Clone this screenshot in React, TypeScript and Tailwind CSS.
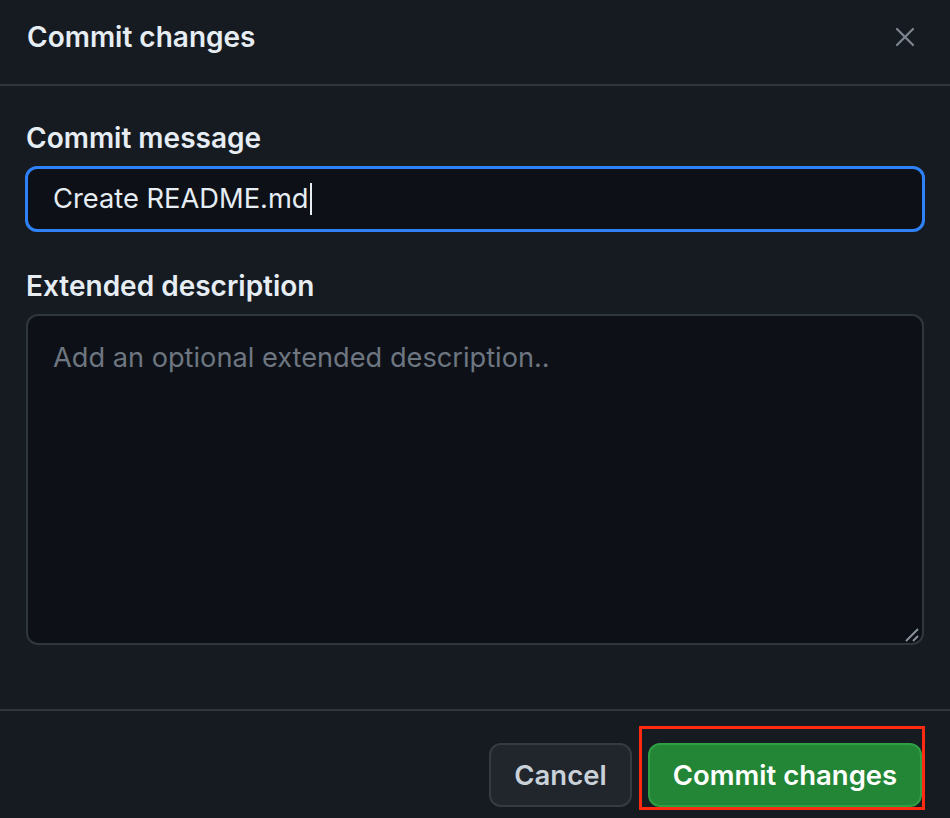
import React from "react";

export default function App() {
  return (
    <div className="w-[950px] h-[818px] bg-[#161b22] flex flex-col overflow-hidden font-['Inter','Liberation_Sans',sans-serif] text-[#e6edf3]">
      {/* Header */}
      <div className="h-[86px] shrink-0 border-b-2 border-[#30363d] flex items-start justify-between pl-[27px] pr-[34px] pt-[19px]">
        <h1 className="text-[28px] leading-[36px] font-semibold text-[#e6edf3]">Commit changes</h1>
        <svg width="22" height="22" viewBox="0 0 22 22" className="mt-[7px]" fill="none">
          <path d="M3 3 L19 19 M19 3 L3 19" stroke="#7d8590" strokeWidth="2.2" strokeLinecap="round" />
        </svg>
      </div>

      {/* Body */}
      <div className="flex flex-col px-[26px]">
        <label className="mt-[34px] text-[28px] leading-[36px] font-semibold text-[#e6edf3]">Commit message</label>
        <div className="mt-[10px] -mx-[1px] h-[66px] rounded-[12px] border-[3px] border-[#2f81f7] bg-[#0d1117] flex items-center pl-[25px]">
          <span className="text-[27.3px] leading-[36px] text-[#e6edf3]">Create README.md</span>
          <span className="ml-[1px] w-[2px] h-[32px] bg-[#e6edf3]" />
        </div>

        <label className="mt-[36px] text-[28px] leading-[36px] font-semibold text-[#e6edf3]">Extended description</label>
        <div className="relative mt-[10px] h-[331px] rounded-[12px] border-2 border-[#30363d] bg-[#0d1117] pt-[24px] pl-[25px]">
          <span className="text-[27.2px] leading-[36px] text-[#6e7681]">Add an optional extended description..</span>
          <svg width="16" height="16" viewBox="0 0 16 16" className="absolute right-[2px] bottom-[0px]" fill="none">
            <path d="M2 14 L14 2 M9 14 L14 9" stroke="#8b949e" strokeWidth="1.8" />
          </svg>
        </div>
      </div>

      {/* Footer */}
      <div className="mt-[64px] border-t-2 border-[#30363d] flex justify-end gap-[16px] pt-[32px] pr-[28px]">
        <button className="h-[64px] w-[143px] rounded-[12px] border-2 border-[#363b42] bg-[#21262d] text-[27.5px] leading-[36px] font-semibold text-[#c9d1d9]">
          Cancel
        </button>
        <div className="relative">
          <button className="h-[64px] w-[274px] rounded-[12px] border-2 border-[#2ea043] bg-[#238636] text-[27.5px] leading-[36px] font-semibold text-white">
            Commit changes
          </button>
          <div className="absolute -left-[9px] -top-[17px] -right-[3px] -bottom-[3px] border-[3px] border-[#ff2a12] pointer-events-none" />
        </div>
      </div>
    </div>
  );
}
